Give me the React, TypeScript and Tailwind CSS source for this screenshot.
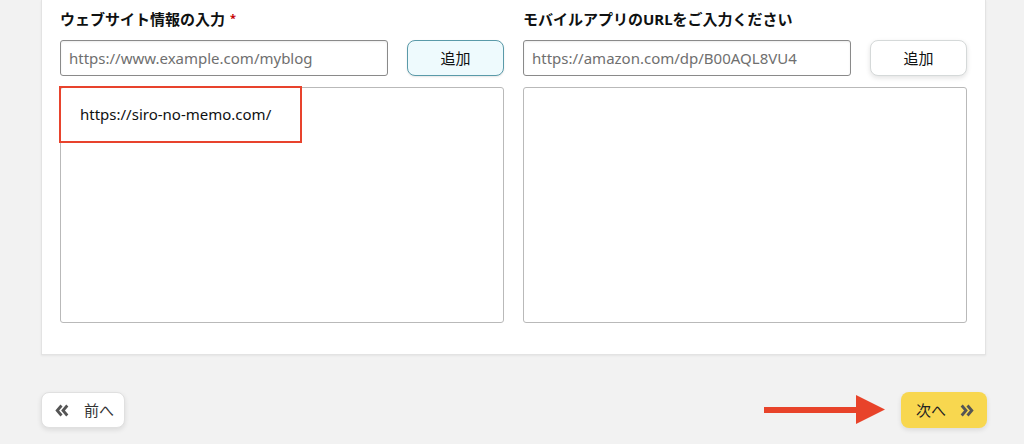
import React from "react";

const font = { fontFamily: '"Noto Sans", "Noto Sans CJK JP", sans-serif' };

function Column({
  label,
  required,
  placeholder,
  active,
  children,
}: {
  label: string;
  required?: boolean;
  placeholder: string;
  active?: boolean;
  children?: React.ReactNode;
}) {
  return (
    <div className="flex flex-col w-[444px]">
      <div className="h-[40px] flex items-center pb-[1px] text-[15px] font-bold text-[#0f1111] leading-none">
        {label}
        {required && <span className="text-[#c40000] text-[11px] ml-[5px] -mt-[4px]">*</span>}
      </div>
      <div className="flex items-center">
        <div className="w-[328px] h-[36px] border border-[#8a8a8a] rounded-[3px] bg-white flex items-center px-[8px] text-[15px] text-[#6f6f6f] shadow-[inset_0_1px_2px_rgba(0,0,0,0.08)]">
          {placeholder}
        </div>
        <div className="flex-1 flex justify-end">
          <button
            className={
              "h-[36px] w-[97px] rounded-[8px] text-[15px] text-[#0f1111] " +
              (active
                ? "bg-[#eefafd] border border-[#5a9aa9] shadow-[0_1px_2px_rgba(0,0,0,0.1)]"
                : "bg-white border border-[#d5d9d9] shadow-[0_2px_5px_rgba(15,17,17,0.12)]")
            }
          >
            追加
          </button>
        </div>
      </div>
      <div className="relative mt-[11px] h-[236px] border border-[#b9b9b9] rounded-[3px] bg-white">
        {children}
      </div>
    </div>
  );
}

export default function App() {
  return (
    <div className="w-[1024px] h-[444px] bg-[#f2f2f2] relative overflow-hidden" style={font}>
      <div className="ml-[41px] w-[945px] h-[355px] bg-white border-x border-b border-[#e3e3e3] shadow-[0_1px_2px_rgba(0,0,0,0.06)] pl-[18px] flex gap-[19px]">
        <Column label="ウェブサイト情報の入力" required placeholder="https://www.example.com/myblog" active>
          <div className="absolute left-[-2px] top-[-2px] w-[243px] h-[57px] border-2 border-[#e8432d] flex items-center pl-[19px] text-[15px] text-[#0f1111]">
            https://siro-no-memo.com/
          </div>
        </Column>
        <Column label="モバイルアプリのURLをご入力ください" placeholder="https://amazon.com/dp/B00AQL8VU4" />
      </div>
      <div className="mt-[37px] pl-[41px] pr-[37px] flex justify-between items-center">
        <button className="h-[36px] w-[84px] rounded-[8px] bg-white border border-[#e0e0e0] shadow-[0_2px_5px_rgba(15,17,17,0.10)] flex items-center pl-[13px] text-[15px] text-[#333]">
          <svg width="14" height="13" viewBox="0 0 14 13" className="mr-[15px]">
            <path d="M6.5 1.5 L2.2 6.5 L6.5 11.5" fill="none" stroke="#555" strokeWidth="2.8" />
            <path d="M12.3 1.5 L8 6.5 L12.3 11.5" fill="none" stroke="#555" strokeWidth="2.8" />
          </svg>
          前へ
        </button>
        <button className="h-[36px] w-[86px] rounded-[8px] bg-[#f8d74f] shadow-[0_2px_5px_rgba(15,17,17,0.10)] flex items-center pl-[15px] text-[15px] text-[#222]">
          次へ
          <svg width="14" height="13" viewBox="0 0 14 13" className="ml-[14px]">
            <path d="M1.7 1.5 L6 6.5 L1.7 11.5" fill="none" stroke="#555" strokeWidth="2.8" />
            <path d="M7.5 1.5 L11.8 6.5 L7.5 11.5" fill="none" stroke="#555" strokeWidth="2.8" />
          </svg>
        </button>
      </div>
      <svg className="absolute left-[764px] top-[395px]" width="122" height="30" viewBox="0 0 122 30">
        <rect x="0" y="12" width="94" height="6" fill="#e8432a" />
        <polygon points="92,0 121,14.5 92,29" fill="#e8432a" />
      </svg>
    </div>
  );
}
